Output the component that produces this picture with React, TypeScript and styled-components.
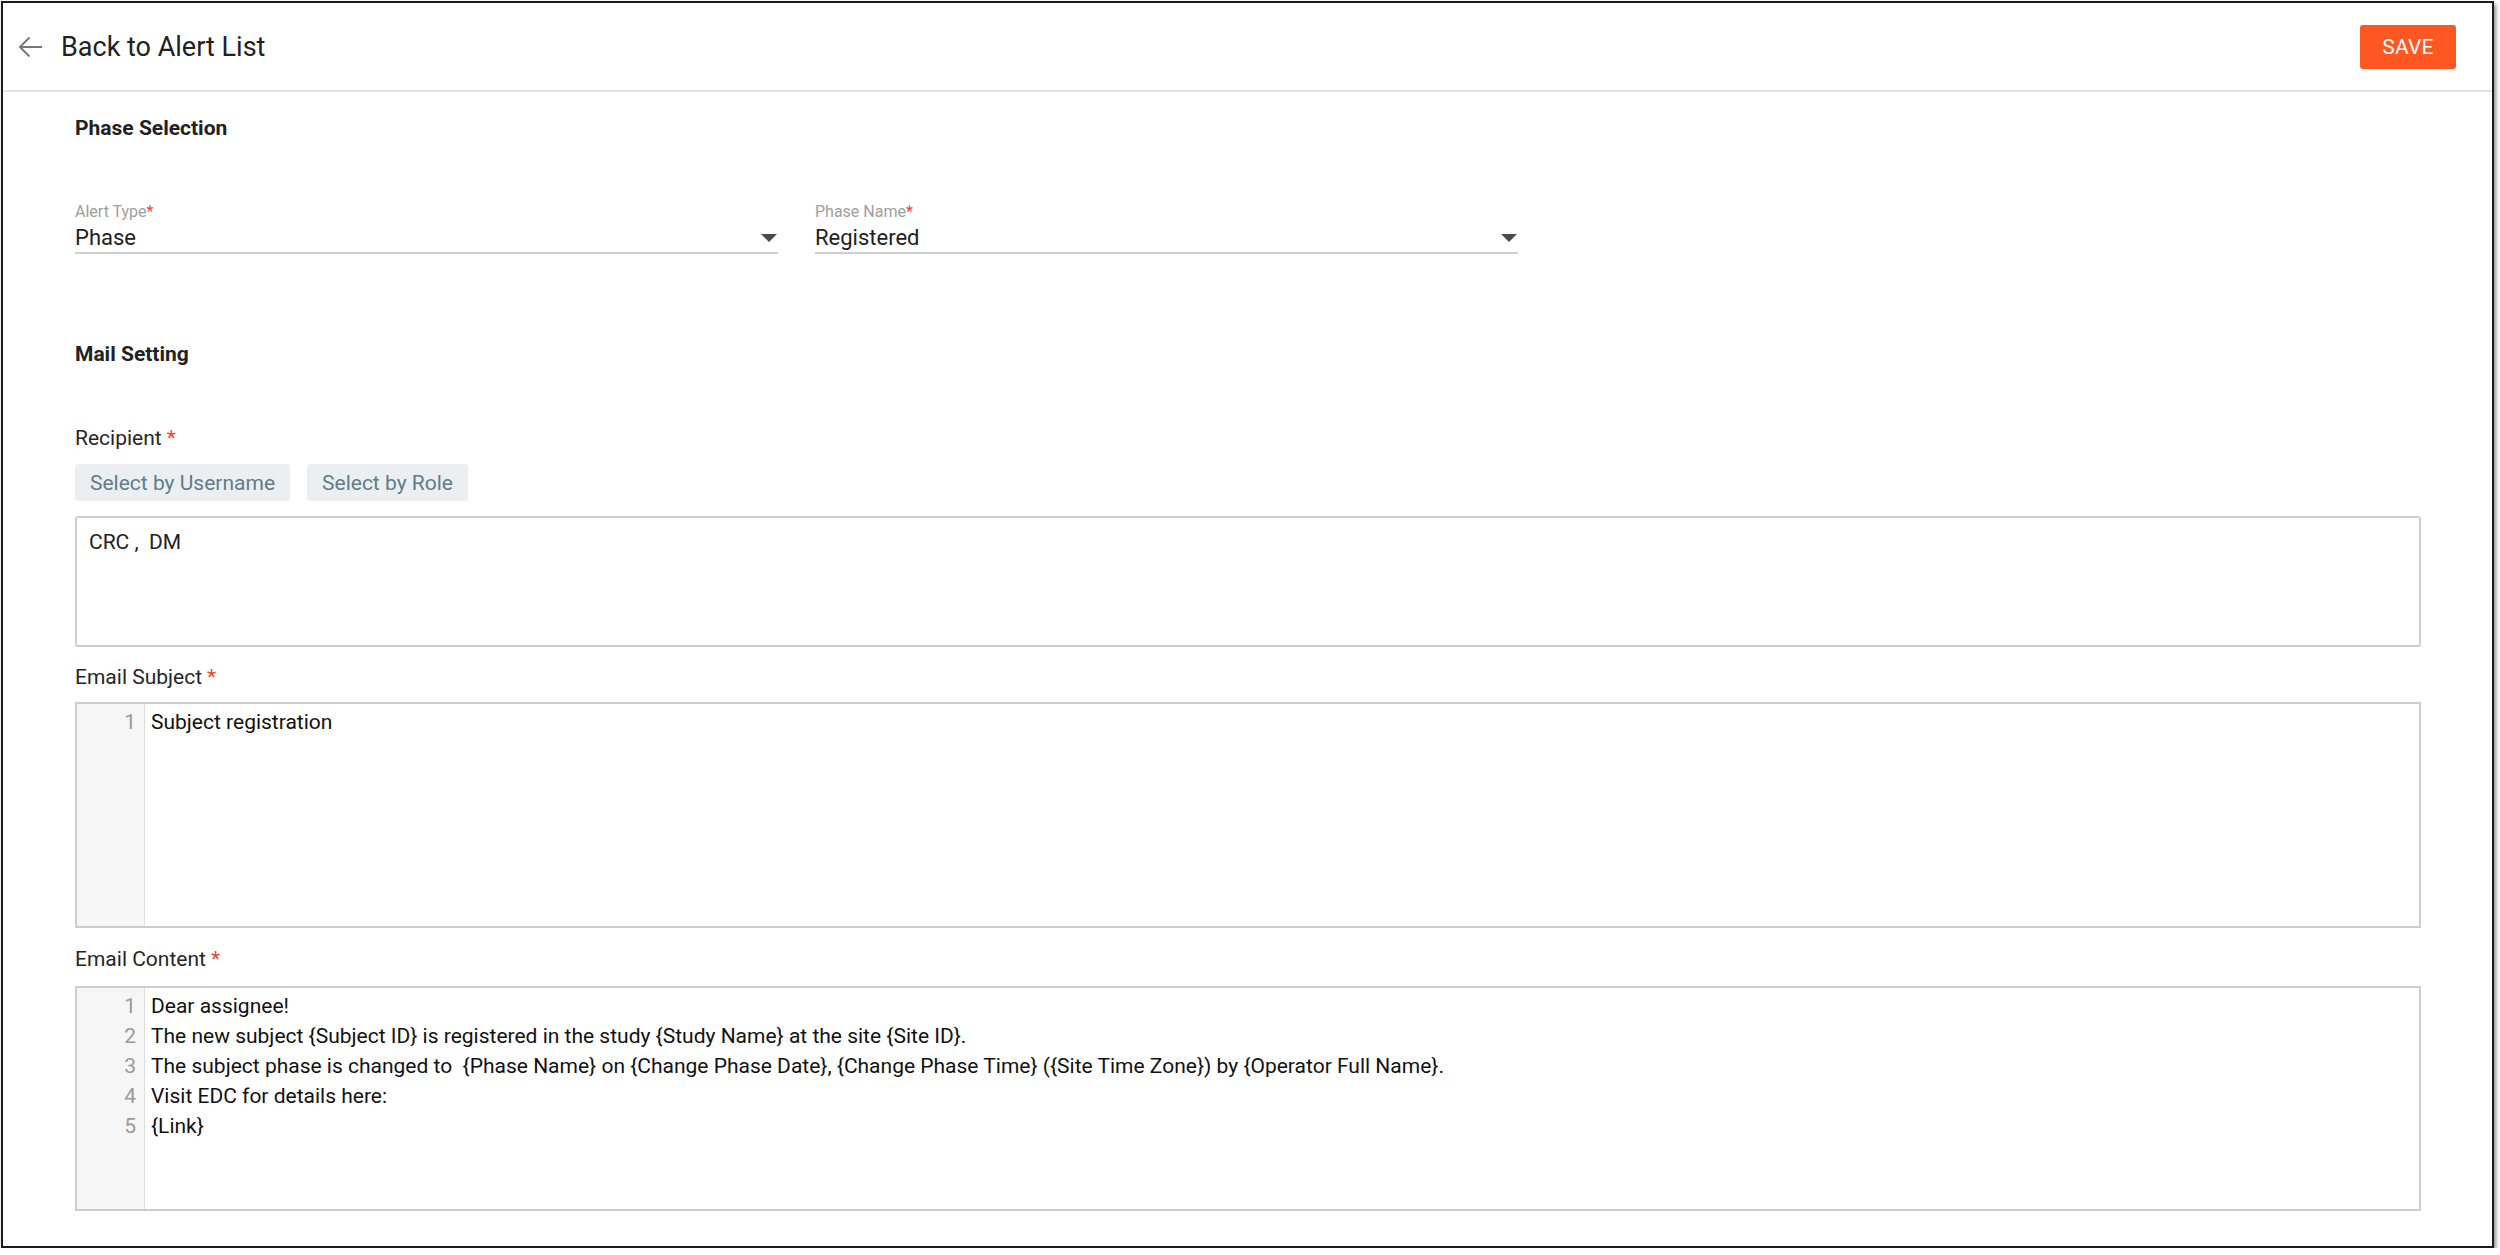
import styled, { createGlobalStyle } from 'styled-components';

const GlobalStyle = createGlobalStyle`
  html, body {
    margin: 0;
    padding: 0;
    background: #ffffff;
  }
  body {
    font-family: Roboto, "Liberation Sans", Arial, sans-serif;
    color: #212121;
  }
  * {
    box-sizing: border-box;
  }
`;

const Frame = styled.div`
  margin: 1px 0 0 1px;
  width: 2493px;
  height: 1247px;
  border: 2px solid #1c1c1c;
  box-shadow: 2px 3px 4px rgba(0, 0, 0, 0.45);
  background: #fff;
  display: flex;
  flex-direction: column;
`;

const Header = styled.header`
  height: 89px;
  flex-shrink: 0;
  display: flex;
  align-items: center;
  justify-content: space-between;
  padding: 0 36px 0 9px;
  border-bottom: 2px solid #e2e2e2;
`;

const BackLink = styled.a`
  display: flex;
  align-items: center;
  gap: 13px;
  color: #212121;
  text-decoration: none;
  font-size: 27px;
  cursor: pointer;

  svg {
    display: block;
  }
`;

const SaveButton = styled.button`
  width: 96px;
  height: 44px;
  border: none;
  border-radius: 3px;
  background: #ff5722;
  color: #fff;
  font-family: inherit;
  font-size: 21px;
  font-weight: 400;
  letter-spacing: 0.2px;
  cursor: pointer;
`;

const Content = styled.main`
  display: flex;
  flex-direction: column;
  padding: 0 71px 0 72px;
`;

const SectionTitle = styled.h2<{ $top: number }>`
  margin: ${(p) => p.$top}px 0 0;
  font-size: 21px;
  line-height: 24px;
  font-weight: 700;
  color: #222;
`;

const SelectRow = styled.div`
  display: grid;
  grid-template-columns: 703px 703px;
  column-gap: 37px;
  margin-top: 62px;
`;

const SelectField = styled.div`
  display: flex;
  flex-direction: column;
`;

const SmallLabel = styled.label`
  font-size: 16px;
  line-height: 19px;
  color: #9e9e9e;
`;

const Required = styled.span`
  color: #f44336;
`;

const SelectBox = styled.div`
  margin-top: 5px;
  display: flex;
  align-items: center;
  justify-content: space-between;
  padding-bottom: 2px;
  border-bottom: 2px solid #cfcfcf;
  font-size: 22px;
  line-height: 24px;
  color: #212121;

  svg {
    margin-right: 1px;
  }
`;

const FieldLabel = styled.div<{ $top: number }>`
  margin-top: ${(p) => p.$top}px;
  font-size: 21px;
  line-height: 24px;
  color: #262626;

  ${Required} {
    margin-left: 5px;
  }
`;

const ChipRow = styled.div`
  display: flex;
  gap: 17px;
  margin-top: 14px;
`;

const ChipButton = styled.button`
  height: 37px;
  padding: 0 15px;
  border: none;
  border-radius: 3px;
  background: #eceff1;
  color: #607d8b;
  font-family: inherit;
  font-size: 21px;
  cursor: pointer;
`;

const RecipientBox = styled.div`
  margin-top: 15px;
  height: 131px;
  border: 2px solid #cdcdcd;
  border-radius: 3px;
  padding: 12px 12px;
  font-size: 21px;
  line-height: 24px;
  color: #212121;
`;

const Editor = styled.div<{ $top: number; $height: number }>`
  margin-top: ${(p) => p.$top}px;
  height: ${(p) => p.$height}px;
  border: 2px solid #cdcdcd;
  display: flex;
  font-size: 21px;
  line-height: 30px;
`;

const Gutter = styled.div`
  width: 68px;
  flex-shrink: 0;
  background: #f6f6f6;
  border-right: 1px solid #dddddd;
  padding: 3px 8px 0 0;
  text-align: right;
  color: #9a9a9a;
`;

const Lines = styled.div`
  flex: 1;
  padding: 3px 0 0 6px;
  color: #111;
  white-space: pre;
`;

const ArrowDrop = () => (
  <svg width="16" height="8" viewBox="0 0 16 8">
    <path d="M0 0h16L8 8z" fill="#4a4a4a" />
  </svg>
);

const subjectLines = ['Subject registration'];

const contentLines = [
  'Dear assignee!',
  'The new subject {Subject ID} is registered in the study {Study Name} at the site {Site ID}.',
  'The subject phase is changed to  {Phase Name} on {Change Phase Date}, {Change Phase Time} ({Site Time Zone}) by {Operator Full Name}.',
  'Visit EDC for details here:',
  '{Link}',
];

function CodeArea({ lines, top, height }: { lines: string[]; top: number; height: number }) {
  return (
    <Editor $top={top} $height={height}>
      <Gutter>
        {lines.map((_, i) => (
          <div key={i}>{i + 1}</div>
        ))}
      </Gutter>
      <Lines>
        {lines.map((line, i) => (
          <div key={i}>{line}</div>
        ))}
      </Lines>
    </Editor>
  );
}

export default function App() {
  return (
    <>
      <GlobalStyle />
      <Frame>
        <Header>
          <BackLink>
            <svg width="36" height="36" viewBox="0 0 24 24">
              <path d="M20 11.3H6.9l5.2-5.2L11.2 5.2 4.4 12l6.8 6.8.9-.9-5.2-5.2H20z" fill="#777" />
            </svg>
            Back to Alert List
          </BackLink>
          <SaveButton>SAVE</SaveButton>
        </Header>

        <Content>
          <SectionTitle $top={24}>Phase Selection</SectionTitle>

          <SelectRow>
            <SelectField>
              <SmallLabel>
                Alert Type<Required>*</Required>
              </SmallLabel>
              <SelectBox>
                Phase
                <ArrowDrop />
              </SelectBox>
            </SelectField>
            <SelectField>
              <SmallLabel>
                Phase Name<Required>*</Required>
              </SmallLabel>
              <SelectBox>
                Registered
                <ArrowDrop />
              </SelectBox>
            </SelectField>
          </SelectRow>

          <SectionTitle $top={88}>Mail Setting</SectionTitle>

          <FieldLabel $top={60}>
            Recipient<Required>*</Required>
          </FieldLabel>
          <ChipRow>
            <ChipButton>Select by Username</ChipButton>
            <ChipButton>Select by Role</ChipButton>
          </ChipRow>
          <RecipientBox>CRC ,&nbsp; DM</RecipientBox>

          <FieldLabel $top={18}>
            Email Subject<Required>*</Required>
          </FieldLabel>
          <CodeArea lines={subjectLines} top={13} height={226} />

          <FieldLabel $top={19}>
            Email Content<Required>*</Required>
          </FieldLabel>
          <CodeArea lines={contentLines} top={15} height={225} />
        </Content>
      </Frame>
    </>
  );
}
